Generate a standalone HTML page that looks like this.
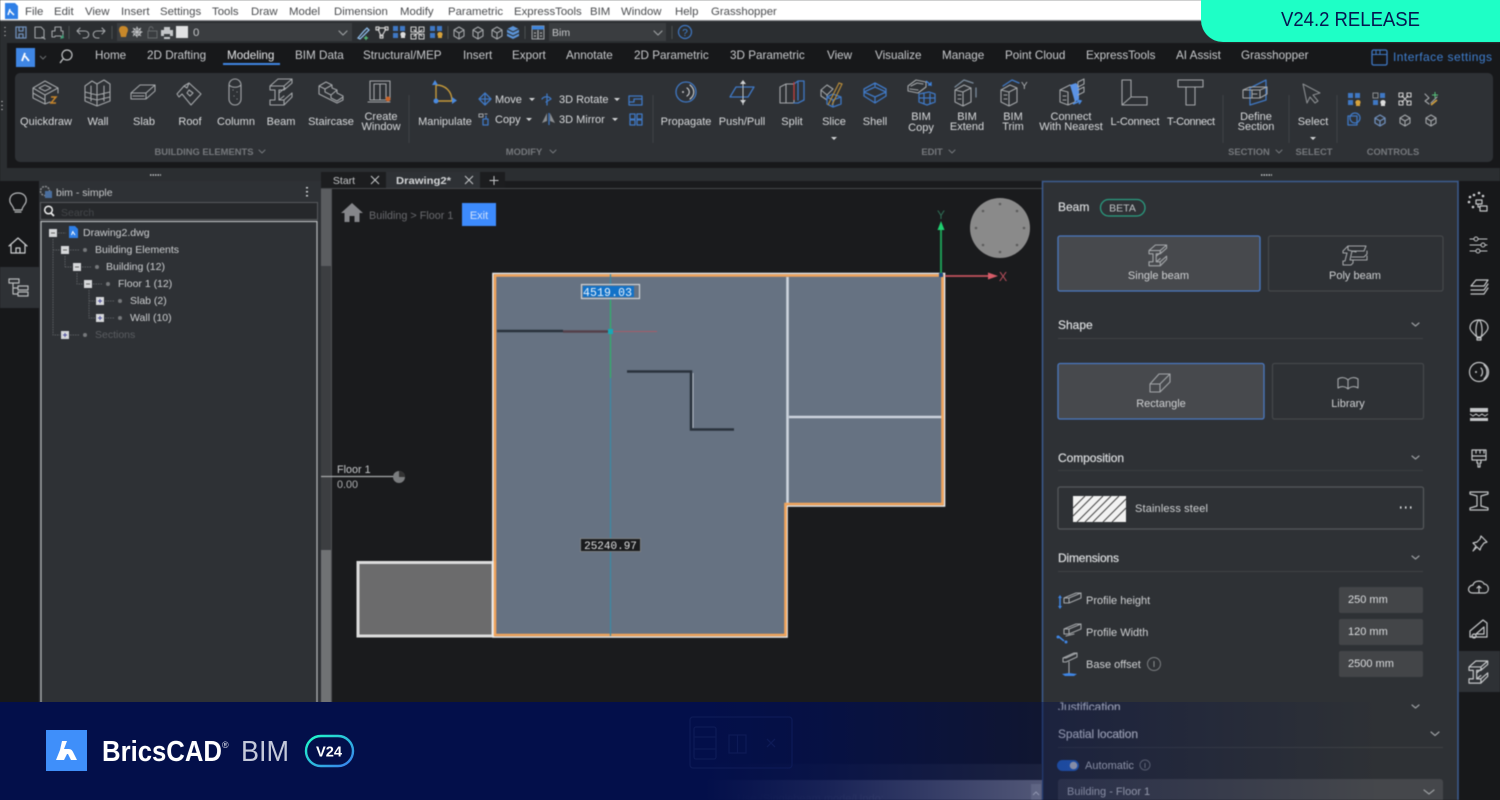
<!DOCTYPE html>
<html lang="en"><head><meta charset="utf-8"><title>BricsCAD BIM V24.2</title>
<style>
html,body{margin:0;padding:0;width:1500px;height:800px;overflow:hidden;background:#1a1b1d}
svg{position:absolute;left:0;top:0;display:block}
text{font-family:"Liberation Sans",sans-serif;white-space:pre}
#app{filter:blur(.6px)}
.m{font-size:11.4px;fill:#4a4c4f}
.t{font-size:11.7px;fill:#c8cacd}
.r{font-size:11px;fill:#d8dadc;text-anchor:middle}
.l{font-size:11px;fill:#d8dadc}
.s{font-size:9.4px;font-weight:bold;fill:#75787c;text-anchor:middle}
.i{fill:none;stroke:#a3a6a9;stroke-width:1.1;stroke-linejoin:round;stroke-linecap:round}
.b{fill:none;stroke:#3f78c4;stroke-width:1.3;stroke-linejoin:round;stroke-linecap:round}
.w{fill:none;stroke:#c4c6c8;stroke-width:1.2;stroke-linejoin:round;stroke-linecap:round}
.tr{font-size:10.5px;fill:#cdcfd1}
.p{font-size:11px;fill:#cfd1d3}
.h{font-size:12px;fill:#dcdee0;stroke:#dcdee0;stroke-width:.2}
.c{fill:none;stroke:#9a9da0;stroke-width:1.2;stroke-linecap:round;stroke-linejoin:round}
</style></head><body>
<svg id="app" width="1500" height="800" viewBox="0 0 1500 800" xmlns="http://www.w3.org/2000/svg">
<rect width="1500" height="800" fill="#1a1b1d"/>
<!-- menu -->
<rect width="1500" height="20" fill="#fff"/><rect y="20" width="1500" height="1" fill="#8b8d90"/>
<path d="M5 3h10l3 3v13H5z" fill="#2f7fe6"/><path d="M10 9l-2 6M10 11l4 4" stroke="#fff" stroke-width="1.5" fill="none"/>
<text class="m" x="25" y="15">File</text><text class="m" x="54" y="15">Edit</text><text class="m" x="85" y="15">View</text><text class="m" x="121" y="15">Insert</text><text class="m" x="160" y="15">Settings</text><text class="m" x="212" y="15">Tools</text><text class="m" x="251" y="15">Draw</text><text class="m" x="289" y="15">Model</text><text class="m" x="334" y="15">Dimension</text><text class="m" x="400" y="15">Modify</text><text class="m" x="448" y="15">Parametric</text><text class="m" x="514" y="15">ExpressTools</text><text class="m" x="590" y="15">BIM</text><text class="m" x="621" y="15">Window</text><text class="m" x="675" y="15">Help</text><text class="m" x="711" y="15">Grasshopper</text>
<!-- quick toolbar -->
<rect y="21" width="1500" height="22" fill="#2b2e31"/>
<rect x="117" y="23" width="235" height="18" fill="#3a3d40"/><rect x="549" y="23" width="117" height="18" fill="#3a3d40"/>
<path d="M5 27v1M5 31v1M5 35v1" stroke="#bbb" stroke-width="1.3"/>
<path class="b" d="M16 27h10v11H16zM19 27v4h4v-4M19 38v-4h4v4" style="stroke:#6f8fbb"/>
<path class="i" d="M35 27h6l3 3v8H35zM42 37l3 2"/><path class="i" d="M52 31h3v-4h6v4h2v6h-2M52 31v6h3M55 36h6"/><path d="M63 34l-3 5 4-1z" fill="#3f9e75"/>
<path d="M69 26v13M112 26v13" stroke="#4d5053"/>
<path class="i" d="M77 31h8c5 0 5 7 0 7h-2M77 31l3-3M77 31l3 3"/><path class="i" d="M105 31h-8c-5 0-5 7 0 7h2M105 31l-3-3M105 31l-3 3"/>
<path d="M123 26c5 0 6 4 4 7l-1 4h-5l-1-4c-2-3-1-7 3-7z" fill="#c8882a"/>
<circle cx="137" cy="32" r="3.5" fill="none" stroke="#c0c2c4" stroke-width="1.5" stroke-dasharray="2 .6"/><path d="M133 28l8 8M141 28l-8 8M137 26.5v11M131.5 32h11" stroke="#bfc1c3" stroke-width=".9"/>
<path d="M148 31h9v7h-9zM149 31v-2c0-3 4-3 4 0" fill="none" stroke="#66696c"/>
<path d="M161 30h3v-3h6v3h3v6h-3v3h-6v-3h-3z" fill="#c4c6c8"/><rect x="164" y="34" width="6" height="3" fill="#3a3d40"/>
<rect x="176" y="26" width="12" height="12" fill="#e1e2e3"/><text x="193" y="36" class="m" style="fill:#c4c6c8">0</text>
<path class="c" d="M339 31l4 4 4-4"/>
<path d="M358 38l6-7 3-3 2 2-3 3-6 6z" fill="none" stroke="#8ebbe8" stroke-width="1.3"/><path d="M366 36v4M364 38h4" stroke="#56c27b" stroke-width="1.2"/>
<path class="i" d="M376 27h3v3h-3zM385 27h3v3h-3zM380 35h3v3h-3zM378 29l3 7M386 29l-4 7M379 28h6" style="stroke:#ccc;stroke-width:1.2"/>
<rect x="393" y="26" width="5" height="5" fill="#3f78c4"/><rect x="400" y="26" width="5" height="5" fill="#3f78c4"/><rect x="393" y="33" width="5" height="5" fill="#3f78c4"/><path d="M403 32c3 0 3 3 2 4v2h-4v-2c-1-1-1-4 2-4z" fill="#ddd"/>
<path class="i" d="M411 27h5v5h-5zM419 27h5v5h-5zM411 34h5v5h-5zM419 34h5v5h-5zM414 30l8 6M422 30l-8 6" style="stroke:#ccc"/>
<rect x="430" y="26" width="5" height="5" fill="#3f78c4"/><rect x="437" y="26" width="5" height="5" fill="#3f78c4"/><rect x="430" y="33" width="5" height="5" fill="#3f78c4"/><path d="M440 32c3 0 3 3 2 4v2h-4v-2c-1-1-1-4 2-4z" fill="#d6a23c"/>
<path d="M448 26v13" stroke="#4d5053"/>
<path class="i" d="M459 27l5 3v6l-5 3-5-3v-6zM454 30l5 3 5-3M459 33v6"/><path class="i" d="M478 27l5 3v6l-5 3-5-3v-6zM473 30l5 3 5-3M478 33v6"/><path class="i" d="M497 27l5 3v6l-5 3-5-3v-6zM492 30l5 3 5-3M497 33v6"/>
<path d="M513 26l6 3v7l-6 3-6-3v-7z" fill="#5b93d6"/><path d="M507 29l6 3 6-3M507 33l6 3 6-3" fill="none" stroke="#2b2e31"/>
<path d="M525 26v13" stroke="#4d5053"/>
<rect x="532" y="26" width="12" height="13" fill="#3a3d40" stroke="#9ca0a4"/><rect x="532" y="26" width="12" height="3.5" fill="#3f86dc"/><path d="M538 30v9M534 33h2M534 36h2M540 33h2M540 36h2" stroke="#b8babc"/>
<text x="552" y="36" style="font-size:10.5px;fill:#c8cacc">Bim</text><path class="c" d="M654 31l4 4 4-4"/>
<path d="M672 26v13" stroke="#4d5053"/>
<circle cx="685" cy="32" r="6.5" fill="none" stroke="#3f78c4" stroke-width="1.2"/><text x="685" y="36" text-anchor="middle" style="font-size:10px;fill:#3f86dc">?</text>
<!-- tab row + ribbon -->
<rect x="0" y="43" width="7" height="125" fill="#2b2e31"/>
<rect x="7" y="43" width="1493" height="125" fill="#17181a"/>
<rect x="15" y="73" width="1478" height="89" rx="5" fill="#2e3135"/>
<rect y="168" width="1500" height="13" fill="#2b2e31"/>
<path d="M2 101v1M2 105v1M2 109v1" stroke="#ccc" stroke-width="1.3"/>
<rect x="16" y="48" width="19" height="19" fill="#3f86e4"/><path d="M25 53l-3 8M25 56l4 5" stroke="#fff" stroke-width="1.8" fill="none"/>
<path d="M40 56l3 3 3-3" fill="none" stroke="#6b6e71"/>
<circle cx="67" cy="55" r="5" fill="none" stroke="#c0c2c4" stroke-width="1.2"/><path d="M63 59l-3 4" stroke="#c0c2c4" stroke-width="1.3"/>
<text class="t" x="95" y="59">Home</text><text class="t" x="147" y="59">2D Drafting</text><text class="t" x="227" y="59" style="fill:#e4e5e7">Modeling</text><text class="t" x="295" y="59">BIM Data</text><text class="t" x="363" y="59">Structural/MEP</text><text class="t" x="463" y="59">Insert</text><text class="t" x="512" y="59">Export</text><text class="t" x="566" y="59">Annotate</text><text class="t" x="634" y="59">2D Parametric</text><text class="t" x="730" y="59">3D Parametric</text><text class="t" x="827" y="59">View</text><text class="t" x="875" y="59">Visualize</text><text class="t" x="942" y="59">Manage</text><text class="t" x="1005" y="59">Point Cloud</text><text class="t" x="1086" y="59">ExpressTools</text><text class="t" x="1176" y="59">AI Assist</text><text class="t" x="1241" y="59">Grasshopper</text>
<rect x="223" y="63" width="57" height="2" fill="#3f86e4"/>
<rect x="1372" y="50" width="15" height="15" rx="1.5" fill="none" stroke="#3f78c4" stroke-width="1.3"/><path d="M1372 54.5h15M1376 50v4M1380 50v4" stroke="#3f78c4"/>
<text x="1393" y="61" textLength="99" style="font-size:12px;fill:#3f7fd0">Interface settings</text>
<!-- ribbon labels -->
<text class="r" x="46" y="125">Quickdraw</text><text class="r" x="98" y="125">Wall</text><text class="r" x="144" y="125">Slab</text><text class="r" x="190" y="125">Roof</text><text class="r" x="236" y="125">Column</text><text class="r" x="281" y="125">Beam</text><text class="r" x="331" y="125">Staircase</text><text class="r" x="381" y="120">Create</text><text class="r" x="381" y="130">Window</text><text class="r" x="445" y="125">Manipulate</text>
<text class="l" x="495" y="103">Move</text><text class="l" x="559" y="103">3D Rotate</text><text class="l" x="495" y="123">Copy</text><text class="l" x="559" y="123">3D Mirror</text>
<path d="M529 98h6l-3 3zM526 118h6l-3 3zM614 98h6l-3 3zM612 118h6l-3 3z" fill="#d2d4d6"/>
<text class="r" x="686" y="125">Propagate</text><text class="r" x="742" y="125">Push/Pull</text><text class="r" x="792" y="125">Split</text><text class="r" x="834" y="125">Slice</text><text class="r" x="875" y="125">Shell</text><text class="r" x="921" y="120">BIM</text><text class="r" x="921" y="131">Copy</text><text class="r" x="967" y="120">BIM</text><text class="r" x="967" y="130">Extend</text><text class="r" x="1013" y="120">BIM</text><text class="r" x="1013" y="130">Trim</text><text class="r" x="1071" y="120">Connect</text><text class="r" x="1071" y="130">With Nearest</text><text class="r" x="1135" y="125" textLength="49">L-Connect</text><text class="r" x="1191" y="125" textLength="48">T-Connect</text><text class="r" x="1256" y="120">Define</text><text class="r" x="1256" y="130">Section</text><text class="r" x="1313" y="125">Select</text>
<path d="M831 137h6l-3 3zM1310 137h6l-3 3z" fill="#d2d4d6"/>
<text class="s" x="204" y="155">BUILDING ELEMENTS</text><text class="s" x="524" y="155">MODIFY</text><text class="s" x="932" y="155">EDIT</text><text class="s" x="1249" y="155">SECTION</text><text class="s" x="1314" y="155">SELECT</text><text class="s" x="1393" y="155">CONTROLS</text>
<path class="c" style="stroke:#75787c;stroke-width:1" d="M259 150l3 3 3-3M550 150l3 3 3-3M949 150l3 3 3-3M1276 150l3 3 3-3"/>
<path d="M409 95v48M653 95v48M1223 95v48M1289 95v48M1337 95v48" stroke="#404346"/>
<!-- ribbon icons -->
<path class="i" d="M33 88l12-7 13 7-13 7zM39 88l6-3 6 3-6 3zM33 88v10l12 6 5-2M58 88v5M33 93l12 7M45 95v9"/><path d="M51 97h5l-5 6h5" fill="none" stroke="#c8862a" stroke-width="1.5"/>
<path class="i" d="M85 86l7-5 5 3 7-4 6 4v17l-13 5-12-5zM97 84v21M85 92l12 3 13-3M85 97l12 3 13-3M91 86v15M104 86v15"/>
<path class="i" d="M131 93l9-8h15v6l-9 8h-15zM131 93h15l9-8M146 93v6M133 96h11"/>
<path class="i" d="M177 94l7-8 3 2 2-5 12 11-10 11-9-11-3 3zM189 83l-5 3M189 90l4 3-3 3-3-3z"/>
<rect class="i" x="229" y="79" width="12" height="26" rx="6"/><path class="i" d="M229 85c3 3 9 3 12 0M233 90h.1M237 92h.1M234 96h.1M237 99h.1"/>
<path class="i" d="M270 86h14v4h-5v10h5v5h-14v-5h5v-10h-5zM270 86l8-7h14l-8 7M292 79v4l-8 7M279 93l6-5M284 100l8-7v4l-8 8M279 100l5-4"/>
<path class="i" d="M319 86l7-4 6 3v3l5 2v3l6 3v4l-6 3-18-9zM319 86l6 3v3l6 3v3l6 3M325 89l7-4M331 95l6-5M337 101l6-4"/>
<path class="i" d="M370 81h20v19h-20zM374 84h12v16h-12zM380 84v16M368 102h22"/><circle cx="388" cy="99" r="2.5" fill="#c8642a"/>
<path d="M436 85v16h16M436 85c9 0 16 6 16 16" fill="none" stroke="#c69a3a" stroke-width="1.4"/><path d="M432 85l3-5 3 5zM452 97l5 3.500-5 3.500z" fill="#4a8ae0"/><circle cx="436" cy="101" r="2.500" fill="#4a8ae0"/>
<path class="b" d="M485 93l6 6-6 6-6-6zM479 99h12M485 93v12"/>
<path class="i" d="M479 114h4v3h-4zM485 114h2"/><path class="b" d="M483 119h5v6h-5zM486 119v-3"/>
<path class="b" d="M547 94v11M542 99c2-3 7-3 9 0l-5 3"/>
<path d="M547 113l-5 10 5-2zM550 113l5 10-5-2z" fill="#8a8d90"/><path d="M549 113v12" stroke="#3f78c4" stroke-width="1.3"/>
<path class="b" d="M629 96h13v9h-13zM629 102h5v-3h8"/>
<path class="b" d="M630 114h5v5h-5zM637 114h5v5h-5zM630 120h5v5h-5zM637 120h5v5h-5z"/>
<circle class="b" cx="686" cy="92" r="10"/><path class="w" d="M687 88c3 2 3 6 0 8M690 85c5 4 5 10 0 14"/><circle cx="683" cy="92" r="1" fill="#c4c6c8"/>
<path class="b" d="M736 87h18l-6 10h-18z"/><path d="M743 81v24" stroke="#c4c6c8" stroke-width="1"/><path d="M740 84l3-4 3 4zM740 100l3 4 3-4z" fill="#d0d2d4"/>
<path class="i" d="M780 87l6-3h8v19h-14zM794 84v19M786 84v19"/><path class="b" d="M794 84l4-3h6v19l-6 3h-4M798 81v19"/><path d="M794 82v18" stroke="#c43a3a" stroke-width="1.200"/>
<path class="i" d="M821 90l6-5 6 4-6 6zM821 90v6l6 4v-5"/><path class="b" d="M833 94l8 3v7l-8 3-6-3v-7zM827 97l6 3 8-3M833 100v6"/><path d="M828 105l11-22 3 1-10 21" fill="none" stroke="#b58a3a" stroke-width="1.200"/>
<path class="b" d="M875 83l11 6v7l-11 7-11-7v-7zM864 92l11-5 11 5-11 5zM875 83v4M875 97v6"/>
<path class="i" d="M908 86l8-6 10 2v5l-8 6-10-2zM911 86l6-3 6 1M910 89l8 1"/><path class="b" d="M919 94l10-2 6 2v8l-8 3-8-3zM919 98l16 0M924 94v10M930 94v10"/><path d="M926 81l5 4v-3M931 85h-3" stroke="#3f86e4" fill="none" stroke-width="1.300"/>
<path class="i" d="M955 90l9-5 7 3v14l-8 4-8-4zM963 92v14M955 90l8 2 8-4M958 95h3M958 99h3"/><path d="M955 87l9-7 9 3M976 88v9" class="b" style="stroke:#7a8a9a"/>
<path class="i" d="M1001 90l9-5 7 3v14l-8 4-8-4zM1009 92v14M1001 90l8 2 8-4M1004 95h3M1004 99h3"/><path class="b" d="M1003 86l9-6 7 3"/><text x="1021" y="89" style="font-size:10px;fill:#b0b3b6">Y</text>
<path class="i" d="M1060 90l10-5 5 3v14l-7 3-8-3zM1068 92v13M1060 90l8 2M1063 96h3M1063 100h3"/><path d="M1070 85l6-2 3 3v13l-4 3z" fill="#5b93e6"/><path class="i" d="M1078 82l6-3v5l-6 3zM1078 90l6-3v5l-6 3"/><path d="M1073 104l7-3M1077 100l4 1-2 3" stroke="#4a8ae0" fill="none" stroke-width="1.500"/>
<path class="i" d="M1122 80h9v17h16v8h-25zM1122 105l9-8"/>
<path class="i" d="M1178 80h25v7h-25zM1186 87h9v18h-9z"/>
<path class="b" d="M1250 88l16-8v20l-16 5z"/><path class="i" d="M1243 90l7-3h17v7l-7 4h-17zM1243 90h17l7-3M1260 90v8M1252 90v8M1252 94h5"/>
<path class="i" style="stroke:#8a8d90" d="M1303 84l17 9-7 2 5 6-3 2-5-6-3 6z"/>
<g fill="#3f78c4"><rect x="1348" y="93" width="5" height="5"/><rect x="1355" y="93" width="5" height="5"/><rect x="1348" y="100" width="5" height="5"/><rect x="1373" y="93" width="5" height="5" fill="none" stroke="#8a8d90"/><rect x="1380" y="93" width="5" height="5"/><rect x="1373" y="100" width="5" height="5"/></g>
<path d="M1358 100c3 0 3 3 2 4v2h-4v-2c-1-1-1-4 2-4z" fill="#d6a23c"/><path d="M1383 100c3 0 3 3 2 4v2h-4v-2c-1-1-1-4 2-4z" fill="#ddd"/>
<path class="i" d="M1399 93h4v4h-4zM1407 93h4v4h-4zM1399 101h4v4h-4zM1407 101h4v4h-4zM1402 96l6 6M1408 96l-6 6" style="stroke:#ccc"/>
<path class="i" d="M1425 94l4 4-4 3 4 3M1431 103l6-6"/><path d="M1435 92v6M1432 95h6" stroke="#56c27b"/><path d="M1431 105l6-5" stroke="#d6a23c" stroke-width="1.500"/>
<path class="b" d="M1348 116h9v9h-9z"/><circle class="b" cx="1355" cy="118" r="5"/>
<path class="b" d="M1380 115l5 3v5l-5 3-5-3v-5zM1375 118l5 3 5-3M1380 121v5" style="stroke:#6f8fbb"/>
<path class="i" d="M1405 115l5 3v5l-5 3-5-3v-5zM1400 118l5 3 5-3M1405 121v5"/>
<path class="i" d="M1431 115l5 3v5l-5 3-5-3v-5zM1426 118l5 3 5-3M1431 121v5"/>
<path d="M150 175h11M1261 175h11" stroke="#c4c6c8" stroke-width="1.400" stroke-dasharray="1.500 1"/>
<!-- left sidebar -->
<rect x="0" y="181" width="39" height="530" fill="#17181a"/><rect x="0" y="267" width="39" height="41" fill="#2e3135"/>
<path class="w" d="M18 193c6 0 9 4 8 9-1 3-4 5-4 8h-8c0-3-3-5-4-8-1-5 2-9 8-9zM15 212h6" style="stroke:#b8babc"/>
<path class="w" d="M9 246l9-8 9 8M11 245v8h14v-8M16 253v-5h4v5" style="stroke:#ccced0"/>
<path class="w" d="M9 279h10v4H9zM13 283v11h5M13 288h5M18 286h10v4H18zM18 292h10v4H18z" style="stroke:#b8babc"/>
<!-- left panel -->
<rect x="39" y="181" width="282" height="530" fill="#2e3135"/>
<circle cx="45" cy="191" r="4.500" fill="none" stroke="#8a8d90" stroke-width="1.500" stroke-dasharray="2 1"/><rect x="45" y="191" width="7" height="7" fill="#4a6e9e"/>
<text x="56" y="196" style="font-size:10.500px;fill:#c6c8ca">bim - simple</text>
<path d="M307 187v1.500M307 191v1.500M307 195v1.500" stroke="#d0d2d4" stroke-width="2"/>
<rect x="40.500" y="202.500" width="277" height="17" fill="#26282b" stroke="#56595c"/>
<circle cx="48.500" cy="210" r="3.800" fill="none" stroke="#eee" stroke-width="1.500"/><path d="M51 213l3 3" stroke="#eee" stroke-width="1.800"/>
<text x="61" y="216" style="font-size:10.500px;fill:#44474a">Search</text>
<rect x="41" y="221.500" width="276" height="490" fill="#2e3135" stroke="#b9bbbd" stroke-width="1.200"/>
<path d="M53 239V335h7M65 256v11M53 250h7M70 250h10M77 273v11h6M65 267h7M82 267h10M89 290v28h6M93 284h10M89 301h6M105 301h10M105 318h10M70 335h10M58 233h8" fill="none" stroke="#5b5e61" stroke-dasharray="1.500 1"/>
<g fill="#d6d8da"><rect x="49" y="229" width="8" height="8"/><rect x="61" y="246" width="8" height="8"/><rect x="73" y="263" width="8" height="8"/><rect x="84" y="280" width="8" height="8"/><rect x="96" y="297" width="8" height="8"/><rect x="96" y="314" width="8" height="8"/><rect x="61" y="331" width="8" height="8"/></g>
<path d="M51 233h4M63 250h4M75 267h4M86 284h4" stroke="#666" stroke-width="1"/><path d="M98 301h4M100 299v4M98 318h4M100 316v4M63 335h4M65 333v4" stroke="#5050a0" stroke-width="1"/>
<path d="M69 226h6l3 3v9h-9z" fill="#2f7fe6"/><path d="M73 231l-1.500 4M73 232l2 3" stroke="#fff" fill="none"/>
<g fill="#75787b"><circle cx="85" cy="250" r="2"/><circle cx="97" cy="267" r="2"/><circle cx="108" cy="284" r="2"/><circle cx="120" cy="301" r="2"/><circle cx="120" cy="318" r="2"/><circle cx="85" cy="335" r="2"/></g>
<text class="tr" x="83" y="236">Drawing2.dwg</text><text class="tr" x="95" y="253">Building Elements</text><text class="tr" x="106" y="270">Building (12)</text><text class="tr" x="118" y="287">Floor 1 (12)</text><text class="tr" x="130" y="304">Slab (2)</text><text class="tr" x="130" y="321">Wall (10)</text><text class="tr" x="95" y="338" style="fill:#5b5e62">Sections</text>
<!-- scrollbar -->
<rect x="321" y="181" width="11" height="530" fill="#3c3e41"/><rect x="321" y="189" width="10" height="77" fill="#5b5d60"/><rect x="321" y="550" width="10" height="161" fill="#707274"/>
<path d="M331.500 188v520" stroke="#4f5154"/>
<!-- tabs -->
<rect x="321" y="172" width="184" height="16" fill="#1c1d1f"/><rect x="386" y="172" width="94" height="16" fill="#2e3135"/><rect x="321" y="188" width="721" height="1" fill="#45474a"/>
<text x="344" y="184" text-anchor="middle" style="font-size:10.500px;fill:#c6c8ca">Start</text>
<text x="396" y="184" textLength="55" lengthAdjust="spacingAndGlyphs" style="font-size:10.500px;font-weight:bold;fill:#d4d6d8">Drawing2*</text>
<path d="M371 176l8 8M379 176l-8 8M465 176l8 8M473 176l-8 8M494 176v9M489.500 180.500h9" stroke="#c6c8ca" stroke-width="1"/>
<!-- viewport -->
<rect x="332" y="189" width="710" height="530" fill="#1a1b1d"/>
<path d="M352 203l-11 10h3.500v9h5v-6h5v6h5v-9h3.500z" fill="#85868a"/>
<text x="369" y="219" style="font-size:10.800px;fill:#696a6e">Building &gt; Floor 1</text>
<rect x="462" y="203" width="34" height="23" fill="#3d8bfd"/><text x="479" y="219" text-anchor="middle" style="font-size:11px;fill:#cfe0fa">Exit</text>
<circle cx="1000" cy="228" r="30" fill="#8a8a8a"/>
<g fill="#5d5d5d"><circle cx="1000" cy="204" r="1.300"/><circle cx="1017" cy="211" r="1.300"/><circle cx="1024" cy="228" r="1.300"/><circle cx="1017" cy="245" r="1.300"/><circle cx="1000" cy="252" r="1.300"/><circle cx="983" cy="245" r="1.300"/><circle cx="976" cy="228" r="1.300"/><circle cx="983" cy="211" r="1.300"/></g>
<!-- plan -->
<path d="M358 562.500h135V636H358z" fill="#6b6b6c" stroke="#dcdcdc" stroke-width="3"/>
<path d="M494 274.500H943V505H785.500V636H494z" fill="#667282"/>
<path d="M787.500 277v227M789 417h153" stroke="#ccd3dd" stroke-width="2.600"/>
<path d="M493 273.500H944.500V506H787V637H493z" fill="none" stroke="#eef0f2" stroke-width="1.600"/>
<path d="M495 275.500H942.500V504H785.500V635H495z" fill="none" stroke="#f0a45c" stroke-width="2.600"/>
<path d="M497 331h66" stroke="#2a323c" stroke-width="2.500"/><path d="M563 331.500h47" stroke="#54404a" stroke-width="2.500"/><path d="M610 331.500h47" stroke="#a55c68" stroke-width="1"/>
<path d="M627 371.500h64V429.500h43" fill="none" stroke="#2a323c" stroke-width="2.500"/><path d="M693 373v55" stroke="#b5bcc6" stroke-width="1"/>
<path d="M610.500 274v362" stroke="#3a8aa6" stroke-width="1.200"/><path d="M610.500 300v78" stroke="#33b069" stroke-width="1.200"/><rect x="608" y="329" width="5" height="5" fill="#18a8b8"/>
<rect x="581.500" y="284.500" width="58" height="14" fill="#667282" stroke="#cfd2d6" stroke-width="1.200"/><rect x="583" y="286" width="51" height="11" fill="#1272c8"/>
<text x="583" y="296" style="font-family:'Liberation Mono',monospace;font-size:11.500px;fill:#eaf2fb" textLength="49">4519.03</text>
<rect x="580.500" y="538.500" width="60" height="13" fill="#1a1b1d" stroke="#7c7e80"/>
<text x="610.500" y="549" text-anchor="middle" style="font-family:'Liberation Mono',monospace;font-size:11px;fill:#dfe0e1">25240.97</text>
<path d="M941 274v-45" stroke="#1d9a55" stroke-width="2"/><path d="M941 221l-3.500 9h7z" fill="#1fd070"/><text x="941" y="219" text-anchor="middle" style="font-size:12px;fill:#2e6e55">Y</text>
<path d="M945 276h46" stroke="#c4525c" stroke-width="1.800"/><path d="M998 276l-10-3.500v7z" fill="#d65c68"/><text x="1003" y="281" text-anchor="middle" style="font-size:12.500px;fill:#b44d5a">X</text>
<rect x="939" y="273" width="4" height="4" fill="#1d4a80"/>
<text x="337" y="473" style="font-size:10.800px;fill:#c6c8ca">Floor 1</text><text x="337" y="488" style="font-size:10.800px;fill:#aeb0b2">0.00</text>
<path d="M321 476.500h77" stroke="#a8aaac" stroke-width="1.200"/><circle cx="399" cy="477" r="6" fill="#7a7c7e"/><path d="M399 471a6 6 0 0 1 6 6h-6z" fill="#333"/>
<!-- right panel -->
<rect x="1042.500" y="181.500" width="415.500" height="630" fill="#2e3135" stroke="#3c5c90" stroke-width="1.500"/>
<text x="1058" y="211" style="font-size:12px;fill:#d8dadc;stroke:#d8dadc;stroke-width:.2">Beam</text>
<rect x="1100.500" y="199.500" width="44.500" height="16.500" rx="8.200" fill="none" stroke="#2a9d80" stroke-width="1.300"/><text x="1122.500" y="211.500" text-anchor="middle" style="font-size:10.500px;fill:#c0c4c6">BETA</text>
<rect x="1058" y="236" width="202" height="55" rx="2" fill="#47494d" stroke="#4a78c0" stroke-width="1.300"/>
<rect x="1268.500" y="236" width="174.500" height="55" rx="2" fill="none" stroke="#45484b" stroke-width="1.200"/>
<path class="i" transform="translate(1149 245) scale(.8) translate(-270 -79)" style="stroke-width:1.400" d="M270 86h14v4h-5v10h5v5h-14v-5h5v-10h-5zM270 86l8-7h14l-8 7M292 79v4l-8 7M279 93l6-5M284 100l8-7v4l-8 8M279 100l5-4"/>
<path class="i" d="M1343 251l5-5h18l-2 5h-6l-6 0-2 9h3v3l-2 2h-8v-4h2l2-8h-4zM1348 246v4l8 2M1352 257h12l3-3v-3M1352 260h15v-4"/>
<text x="1158.500" y="279" text-anchor="middle" class="p">Single beam</text><text x="1355" y="279" text-anchor="middle" class="p">Poly beam</text>
<text x="1058" y="329" class="h">Shape</text><path d="M1058 338.500h365" stroke="#3f4245"/>
<path class="c" d="M1412 323l3.500 3 3.500-3"/>
<rect x="1058" y="363.500" width="206" height="55.500" rx="2" fill="#47494d" stroke="#4a78c0" stroke-width="1.300"/>
<rect x="1272.500" y="363.500" width="151" height="55.500" rx="2" fill="none" stroke="#45484b" stroke-width="1.200"/>
<path class="i" d="M1150 384l9-10h11v8l-10 10h-10zM1150 384h10l10-10M1160 384v8"/>
<path class="i" d="M1338 379c3-2 7-2 10 1 3-3 7-3 10-1v9c-3-2-7-2-10 1-3-3-7-3-10-1zM1348 380v9"/>
<text x="1161" y="407" text-anchor="middle" class="p">Rectangle</text><text x="1348" y="407" text-anchor="middle" class="p">Library</text>
<text x="1058" y="462" class="h" textLength="66">Composition</text><path d="M1058 470.500h365" stroke="#3a3d40"/><path class="c" d="M1412 456l3.500 3 3.500-3"/>
<rect x="1058" y="487" width="365.500" height="42" rx="2" fill="none" stroke="#56595c" stroke-width="1.200"/>
<rect x="1073" y="496" width="53" height="26" fill="#f2f2f2"/>
<path d="M1073 508l12-12M1073 516l20-20M1077 522l26-26M1085 522l26-26M1093 522l26-26M1103 522l23-23M1112 522l14-14" stroke="#444" stroke-width="1"/>
<text x="1135" y="512" class="p" textLength="73">Stainless steel</text>
<path d="M1400 507.500h1.500M1405 507.500h1.500M1410 507.500h1.500" stroke="#d8dadc" stroke-width="2.200"/>
<text x="1058" y="562" class="h" textLength="61">Dimensions</text><path d="M1058 571.500h365" stroke="#3f4245"/><path class="c" d="M1412 556l3.500 3 3.500-3"/>
<path class="i" d="M1064 598l12-5h5v5l-12 5h-5zM1064 598h5l12-5M1069 598v5"/>
<path d="M1060 597v11" stroke="#3f86e4" stroke-width="1.500"/><path d="M1058 598l2-3 2 3zM1058 606l2 3 2-3z" fill="#3f86e4"/>
<path class="i" d="M1064 629l12-5h5v5l-12 5h-5zM1064 629h5l12-5M1069 629v5M1066 636l8-2"/><path d="M1058 636l6 5" stroke="#3f86e4" stroke-width="1.500"/><circle cx="1058" cy="637" r="1.500" fill="#3f86e4"/><circle cx="1066" cy="642" r="1.500" fill="#3f86e4"/>
<path class="i" d="M1063 658l11-5h3v4l-11 5h-3zM1063 658h3l11-5M1069 662v12"/><path d="M1062 674l7-1 8 1-3 2h-9z" fill="#3f86e4"/>
<text x="1086" y="604" class="p">Profile height</text><text x="1086" y="636" class="p">Profile Width</text><text x="1086" y="668" class="p">Base offset</text>
<circle cx="1154" cy="664" r="6.500" fill="none" stroke="#7b7e81"/><path d="M1154 661v6" stroke="#8a8d90"/>
<rect x="1339" y="587" width="84" height="26" rx="2" fill="#434548"/><rect x="1339" y="619" width="84" height="26" rx="2" fill="#434548"/><rect x="1339" y="651" width="84" height="26" rx="2" fill="#434548"/>
<text x="1348" y="603" class="p" style="fill:#dcdee0">250 mm</text><text x="1348" y="635" class="p" style="fill:#dcdee0">120 mm</text><text x="1348" y="667" class="p" style="fill:#dcdee0">2500 mm</text>
<text x="1058" y="711" class="h">Justification</text><path class="c" d="M1412 705l3.500 3 3.500-3"/>
<rect x="1044" y="710" width="413" height="90" fill="#2e3135"/>
<text x="1058" y="738" class="h" textLength="80">Spatial location</text><path d="M1058 747.500h385" stroke="#3f4245"/><path class="c" d="M1431 732l4 3.500 4-3.500"/>
<rect x="1057" y="760" width="22" height="11" rx="5.500" fill="#2f72d8"/><circle cx="1073.500" cy="765.500" r="3.800" fill="#d8dce2"/>
<text x="1085" y="769" class="p">Automatic</text><circle cx="1145" cy="765" r="5" fill="none" stroke="#7b7e81"/><path d="M1145 763v5" stroke="#8a8d90"/>
<rect x="1058" y="779" width="385" height="30" rx="3" fill="#45474b"/><text x="1067" y="795" class="p">Building - Floor 1</text><path class="c" d="M1424 790l5 4 5-4"/>
<!-- right sidebar -->
<rect x="1459" y="181" width="41" height="619" fill="#17181a"/><rect x="1459" y="651" width="41" height="41" fill="#2e3135"/>
<g fill="#d0d2d4"><circle cx="1479" cy="193" r="1.300"/><circle cx="1470" cy="197" r="1.300"/><circle cx="1474" cy="195" r="1.300"/><circle cx="1469" cy="202" r="1.300"/><circle cx="1473" cy="207" r="1.300"/><circle cx="1483" cy="196" r="1.300"/></g>
<path class="w" d="M1476 200h6v4h-6zM1480 206h7v5h-7zM1478 204v3h2"/>
<path class="w" d="M1470 239h17M1470 245h17M1470 251h17" style="stroke-width:1"/><circle cx="1476" cy="239" r="2" fill="#17181a" stroke="#c4c6c8"/><circle cx="1483" cy="245" r="2" fill="#17181a" stroke="#c4c6c8"/><circle cx="1478" cy="251" r="2" fill="#17181a" stroke="#c4c6c8"/>
<path class="w" d="M1471 286l5-6h12l-4 6zM1471 290h13l4-6M1471 294h13l4-6M1471 286v0" />
<path class="w" d="M1479 320c-6 0-9 4-9 8 0 3 5 7 7 9h4c2-2 7-6 7-9 0-4-3-8-9-8zM1479 320c-3 2-4 12-2 17M1479 320c3 2 4 12 2 17M1477 338h4v2h-4z"/>
<circle class="w" cx="1479" cy="372" r="9.500"/><path class="w" d="M1481 368c2 2 2 6 0 8M1484 365c4 4 4 10 0 14"/><circle cx="1476" cy="372" r="1" fill="#c4c6c8"/>
<rect x="1470" y="408" width="18" height="4" fill="#c4c6c8"/><rect x="1470" y="418" width="18" height="3" fill="#c4c6c8"/><path d="M1470 414l3 2 3-2 3 2 3-2 3 2 3-2" fill="none" stroke="#c4c6c8"/>
<path class="w" d="M1472 450h14v10h-14zM1472 456h14M1476 450v3M1480 450v3M1484 450v3M1477 460v3h1v4h2v-4h1v-3"/>
<path class="w" d="M1470 492h18v2l-7 2v10l7 2v2h-18v-2l7-2v-10l-7-2z"/>
<path class="w" d="M1481 536l6 6-3 1-3 4-1 3-3-3-4 4 3-5-3-3 4-1 3-3z"/>
<path class="w" d="M1473 593c-6 0-6-7 0-8 1-5 10-5 11-1 5 0 6 8 1 9zM1479 592v-6M1477 588l2-2 2 2"/>
<path class="w" d="M1470 637v-6l13-11 4 3v14zM1484 627v7h-8zM1474 634a2 2 0 1 0 .1 0"/>
<path class="w" transform="translate(1469 661) scale(.85) translate(-270 -79)" style="stroke-width:1.400" d="M270 86h14v4h-5v10h5v5h-14v-5h5v-10h-5zM270 86l8-7h14l-8 7M292 79v4l-8 7M279 93l6-5M284 100l8-7v4l-8 8M279 100l5-4"/>
<!-- bottom strip behind gradient -->
<rect x="332" y="764" width="710" height="16" fill="#2e3034"/><rect x="332" y="780" width="710" height="20" fill="#8f8f99"/>
<path d="M1031 784h10v16h-10z" fill="#a9aab2"/><path d="M1033 795l3-3 3 3" fill="none" stroke="#fff"/>
<text x="737" y="802" style="font-size:11px;fill:#b0b0ba">Use /Singlebeam mode/Undo:</text>
</svg>
<svg width="1500" height="800" viewBox="0 0 1500 800" xmlns="http://www.w3.org/2000/svg">
<defs>
<linearGradient id="g" x1="0" x2="1500" y1="0" y2="0" gradientUnits="userSpaceOnUse"><stop offset="0" stop-color="#030f4a"/><stop offset=".47" stop-color="#030f4a"/><stop offset=".55" stop-color="#030f4a" stop-opacity=".85"/><stop offset=".7" stop-color="#030f4a" stop-opacity=".42"/><stop offset=".92" stop-color="#030f4a" stop-opacity="0"/></linearGradient>
<linearGradient id="v" x1="0" x2="1" y1="0" y2="1"><stop offset="0" stop-color="#1effc6"/><stop offset="1" stop-color="#3a7df0"/></linearGradient>
</defs>
<rect y="702" width="1500" height="98" fill="url(#g)"/>
<g fill="none" stroke="#0d1a56" stroke-width="1.300"><rect x="690" y="717" width="102" height="51" rx="3"/><rect x="694" y="727" width="22" height="32" rx="2"/><path d="M694 737h22M694 749h22M729 735h17v18h-17zM737.500 735v18M767 739l8 8M775 739l-8 8"/></g>
<path d="M1201 0H1500V42H1223a22 22 0 0 1-22-22z" fill="#1effc6"/>
<text x="1281" y="26" textLength="139" lengthAdjust="spacingAndGlyphs" style="font-size:20px;fill:#061650">V24.2 RELEASE</text>
<rect x="46" y="730" width="41" height="41" fill="#3f8ffa"/>
<path d="M62 741h5l-3 8h4c3 0 4 1 5 3l4 8h-6l-3-6h-1l-3 6H56l4-10z" fill="#fff"/>
<text x="102" y="761" textLength="120" lengthAdjust="spacingAndGlyphs" style="font-size:28.500px;font-weight:bold;fill:#fff">BricsCAD</text>
<text x="222" y="748" style="font-size:9px;fill:#dfe3f0">®</text>
<text x="241" y="761" textLength="48" lengthAdjust="spacingAndGlyphs" style="font-size:28.500px;fill:#c4c9da">BIM</text>
<rect x="306" y="736" width="47" height="30" rx="15" fill="none" stroke="url(#v)" stroke-width="2.400"/>
<text x="316" y="756.500" textLength="26" lengthAdjust="spacingAndGlyphs" style="font-size:15px;font-weight:bold;fill:#fff">V24</text>
</svg>
</body></html>
